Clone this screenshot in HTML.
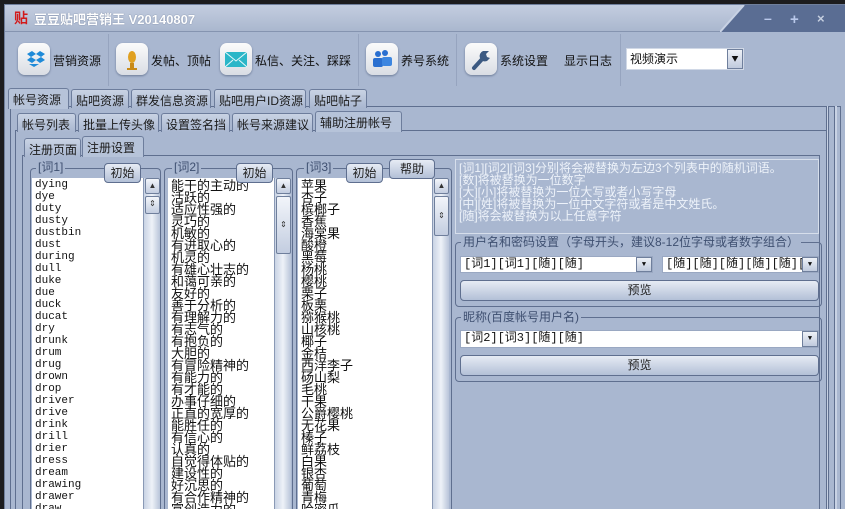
<!DOCTYPE html>
<html><head><meta charset="utf-8"><style>
*{margin:0;padding:0;box-sizing:border-box}
html,body{width:845px;height:509px;overflow:hidden}
body{background:#1c1c1e;font-family:"Liberation Sans","Noto Sans CJK SC",sans-serif;font-size:12px;color:#111;position:relative}
.a{position:absolute}
#win{left:4px;top:4px;width:841px;height:505px;background:#a9b7d0;border-left:1px solid #6f7f9c;border-top:1px solid #6f7f9c}
#title{left:5px;top:5px;width:840px;height:27px;background:linear-gradient(#c3cde0,#aab7ce);border-bottom:1px solid #8594b0}
.tb{color:#fff;font-weight:bold;font-size:13px;text-shadow:0 0 1px #5a6a88}
.ico{width:32px;height:32px;border-radius:7px;background:linear-gradient(#fbfbfb,#d9dde4);box-shadow:0 1px 2px #6b7a96}
.sep{width:1px;height:52px;background:#c4cee0;border-right:1px solid #96a4bf}
.tab{height:19px;border:1px solid #6d7d9c;border-bottom:none;border-radius:3px 3px 0 0;background:linear-gradient(#c9d3e4,#a9b7d0);font-size:12px;padding:2px 4px 0;white-space:nowrap;color:#1a1a1a}
.tab.on{background:#b6c3d9;height:21px}
.pane{border:1px solid #5f6f8f;border-bottom:none}
.list{background:#fff;overflow:hidden}
.mono{font-family:"Liberation Mono","DejaVu Sans Mono",monospace;font-size:11px;line-height:12px;padding-left:3px}
.cj{font-family:"Noto Sans CJK SC",sans-serif;font-size:13px;line-height:12px;padding-left:3px}
.sb{background:linear-gradient(90deg,#c9d3e4,#eef2f8,#b8c4d9);border-left:1px solid #8a99b5}
.sbb{left:1px;width:15px;background:linear-gradient(#f2f5fa,#c3cde0);border:1px solid #6f7f9c;border-radius:2px;font-size:8px;text-align:center;color:#333;line-height:14px}
.grp{border:1px solid #5f6f8f;border-radius:4px}
.grp2{border:1px solid #5f6f8f;border-bottom:none;border-radius:4px 4px 0 0}
.lab{background:#a9b7d0;color:#3e4f70;font-size:12px;padding:0 2px;line-height:13px}
.btn{border:1px solid #5f6f8f;border-radius:4px;background:linear-gradient(#e6ebf4,#b3c0d7);font-size:12px;text-align:center;color:#222}
.cmb{background:#fff;border:1px solid #9aa8c2;font-family:"Liberation Mono","Noto Sans CJK SC",monospace;font-size:12px;line-height:15px;padding-left:3px;overflow:hidden;white-space:nowrap}
.dd{position:absolute;right:0;top:0;width:16px;height:100%;background:linear-gradient(#eef1f7,#c0cadd);border:1px solid #6f7f9c;font-size:7px;text-align:center;line-height:14px}
.tt{font-size:12px}
</style></head><body>
<div id="win" class="a"></div>
<div id="title" class="a"></div>
<div class="a" style="left:14px;top:8px;color:#d21a1a;font-weight:bold;font-size:14px">贴</div>
<div class="a tb" style="left:34px;top:9px">豆豆贴吧营销王 V20140807</div>
<svg class="a" style="left:720px;top:5px" width="125" height="27"><polygon points="0,27 24,0 125,0 125,27" fill="#5a6d93"/><polyline points="0,27 24,0" stroke="#c8d2e4" stroke-width="2" fill="none"/>
<text x="44" y="18" fill="#b9c8ea" font-size="14" font-weight="bold" font-family="Liberation Sans">–</text>
<text x="70" y="19" fill="#b9c8ea" font-size="15" font-weight="bold" font-family="Liberation Sans">+</text>
<text x="97" y="18" fill="#c6cfe0" font-size="13" font-weight="bold" font-family="Liberation Sans">×</text></svg>

<div class="a ico" style="left:18px;top:43px"><svg width="32" height="32"><path d="M9 11l5-3 4 3-5 3zM18 11l4-3 5 3-4 3zM9 17l4-3 5 3-4 3zM18 17l5-3 4 3-5 3zM11 21l5 3 5-3" fill="#1e8ad8"/></svg></div>
<div class="a tt" style="left:53px;top:52px">营销资源</div>
<div class="a sep" style="left:108px;top:34px"></div>
<div class="a ico" style="left:116px;top:43px"><svg width="32" height="32"><ellipse cx="16" cy="14" rx="4" ry="6" fill="#e0a020"/><rect x="14" y="20" width="4" height="5" fill="#c88a18"/><rect x="11" y="25" width="10" height="2" fill="#c88a18"/></svg></div>
<div class="a tt" style="left:151px;top:52px">发帖、顶帖</div>
<div class="a ico" style="left:220px;top:43px"><svg width="32" height="32"><rect x="5" y="9" width="22" height="15" fill="#2ab6c8"/><path d="M5 9l11 9 11-9M5 24l8-7M27 24l-8-7" stroke="#e6f8fa" fill="none"/></svg></div>
<div class="a tt" style="left:255px;top:52px">私信、关注、踩踩</div>
<div class="a sep" style="left:358px;top:34px"></div>
<div class="a ico" style="left:366px;top:43px"><svg width="32" height="32"><circle cx="12" cy="11" r="3" fill="#2a6fd0"/><circle cx="19" cy="10" r="3" fill="#2a6fd0"/><rect x="7" y="15" width="10" height="9" rx="2" fill="#2a6fd0"/><rect x="16" y="14" width="10" height="9" rx="2" fill="#3d86e0"/></svg></div>
<div class="a tt" style="left:401px;top:52px">养号系统</div>
<div class="a sep" style="left:456px;top:34px"></div>
<div class="a ico" style="left:465px;top:43px"><svg width="32" height="32"><path d="M9 25l10-11" stroke="#3c5a82" stroke-width="4" stroke-linecap="round"/><path d="M18 8a5 5 0 0 0 4 10l3-3-3-1-1-3 3-3z" fill="#3c5a82"/></svg></div>
<div class="a tt" style="left:500px;top:52px">系统设置</div>
<div class="a tt" style="left:564px;top:52px">显示日志</div>
<div class="a sep" style="left:620px;top:34px"></div>
<div class="a cmb" style="left:626px;top:48px;width:118px;height:22px;line-height:20px;font-family:'Noto Sans CJK SC',sans-serif;font-size:12px;border-color:#d0d8e6">视频演示<div class="dd" style="line-height:19px">▼</div></div>

<div class="a pane" style="left:10px;top:106px;width:831px;height:403px;background:#a9b7d0"></div>
<div class="a tab on" style="left:8px;top:88px;width:61px">帐号资源</div>
<div class="a tab" style="left:71px;top:89px;width:58px">贴吧资源</div>
<div class="a tab" style="left:131px;top:89px;width:80px">群发信息资源</div>
<div class="a tab" style="left:214px;top:89px;width:92px">贴吧用户ID资源</div>
<div class="a tab" style="left:309px;top:89px;width:58px">贴吧帖子</div>
<div class="a pane" style="left:15px;top:130px;width:812px;height:379px"></div>
<div class="a tab" style="left:17px;top:113px;width:59px">帐号列表</div>
<div class="a tab" style="left:78px;top:113px;width:81px">批量上传头像</div>
<div class="a tab" style="left:161px;top:113px;width:69px">设置签名挡</div>
<div class="a tab" style="left:232px;top:113px;width:81px">帐号来源建议</div>
<div class="a tab on" style="left:315px;top:111px;width:87px">辅助注册帐号</div>
<div class="a pane" style="left:22px;top:155px;width:798px;height:354px"></div>
<div class="a tab" style="left:24px;top:138px;width:57px">注册页面</div>
<div class="a tab on" style="left:82px;top:136px;width:62px">注册设置</div>
<div class="a" style="left:826px;top:106px;width:3px;height:403px;border-left:1px solid #5f6f8f;border-right:1px solid #5f6f8f;background:#c8d2e4"></div>
<div class="a" style="left:834px;top:106px;width:3px;height:403px;border-left:1px solid #5f6f8f;background:#c8d2e4"></div>

<div class="a grp2" style="left:30px;top:168px;width:131px;height:341px"></div>
<div class="a lab" style="left:36px;top:161px">[词1]</div>
<div class="a grp2" style="left:164px;top:168px;width:129px;height:341px"></div>
<div class="a lab" style="left:172px;top:161px">[词2]</div>
<div class="a grp2" style="left:296px;top:168px;width:156px;height:341px"></div>
<div class="a lab" style="left:304px;top:161px">[词3]</div>

<div class="a list mono" style="left:32px;top:178px;width:111px;height:331px;padding-top:1px">dying<br>dye<br>duty<br>dusty<br>dustbin<br>dust<br>during<br>dull<br>duke<br>due<br>duck<br>ducat<br>dry<br>drunk<br>drum<br>drug<br>drown<br>drop<br>driver<br>drive<br>drink<br>drill<br>drier<br>dress<br>dream<br>drawing<br>drawer<br>draw</div>
<div class="a sb" style="left:143px;top:178px;width:17px;height:331px"><div class="a sbb" style="top:0;height:16px">▲</div><div class="a sbb" style="top:18px;height:18px">⇕</div></div>

<div class="a list cj" style="left:168px;top:178px;width:106px;height:331px;padding-top:1px">能干的主动的<br>活跃的<br>适应性强的<br>灵巧的<br>机敏的<br>有进取心的<br>机灵的<br>有雄心壮志的<br>和蔼可亲的<br>友好的<br>善于分析的<br>有理解力的<br>有志气的<br>有抱负的<br>大胆的<br>有冒险精神的<br>有能力的<br>有才能的<br>办事仔细的<br>正直的宽厚的<br>能胜任的<br>有信心的<br>认真的<br>自觉得体贴的<br>建设性的<br>好沉思的<br>有合作精神的<br>富创造力的</div>
<div class="a sb" style="left:274px;top:178px;width:17px;height:331px"><div class="a sbb" style="top:0;height:16px">▲</div><div class="a sbb" style="top:18px;height:58px;line-height:56px">⇕</div></div>

<div class="a list cj" style="left:298px;top:178px;width:134px;height:331px;padding-top:1px">苹果<br>杏子<br>槟榔子<br>香蕉<br>海棠果<br>酸橙<br>黑莓<br>杨桃<br>樱桃<br>栗子<br>板栗<br>猕猴桃<br>山核桃<br>椰子<br>金桔<br>西洋李子<br>砀山梨<br>毛桃<br>干果<br>公爵樱桃<br>无花果<br>榛子<br>鲜荔枝<br>白果<br>银杏<br>葡萄<br>青梅<br>哈密瓜</div>
<div class="a sb" style="left:432px;top:178px;width:17px;height:331px"><div class="a sbb" style="top:0;height:16px">▲</div><div class="a sbb" style="top:18px;height:40px;line-height:38px">⇕</div></div>

<div class="a btn" style="left:104px;top:163px;width:37px;height:20px;line-height:18px">初始</div>
<div class="a btn" style="left:236px;top:163px;width:37px;height:20px;line-height:18px">初始</div>
<div class="a btn" style="left:346px;top:163px;width:37px;height:20px;line-height:18px">初始</div>
<div class="a btn" style="left:389px;top:159px;width:46px;height:20px;line-height:18px">帮助</div>

<div class="a" style="left:455px;top:159px;width:364px;height:75px;border:1px solid #d6deeb;color:#eef3fa;font-size:12px;line-height:12px;padding:2px 3px;font-family:'Liberation Sans','Noto Sans CJK SC',sans-serif">[词1][词2][词3]分别将会被替换为左边3个列表中的随机词语。<br>[数]将被替换为一位数字<br>[大][小]将被替换为一位大写或者小写字母<br>[中][姓]将被替换为一位中文字符或者是中文姓氏。<br>[随]将会被替换为以上任意字符</div>
<div class="a grp" style="left:455px;top:242px;width:367px;height:65px"></div>
<div class="a lab" style="left:461px;top:236px">用户名和密码设置（字母开头，建议8-12位字母或者数字组合）</div>
<div class="a cmb" style="left:460px;top:256px;width:193px;height:17px">[词1][词1][随][随]<div class="dd">▼</div></div>
<div class="a cmb" style="left:662px;top:256px;width:157px;height:17px">[随][随][随][随][随][随]<div class="dd">▼</div></div>
<div class="a btn" style="left:460px;top:280px;width:359px;height:21px;line-height:19px">预览</div>
<div class="a grp" style="left:455px;top:317px;width:367px;height:65px"></div>
<div class="a lab" style="left:461px;top:311px">昵称(百度帐号用户名)</div>
<div class="a cmb" style="left:460px;top:330px;width:359px;height:18px">[词2][词3][随][随]<div class="dd">▼</div></div>
<div class="a btn" style="left:460px;top:355px;width:359px;height:21px;line-height:19px">预览</div>
</body></html>
